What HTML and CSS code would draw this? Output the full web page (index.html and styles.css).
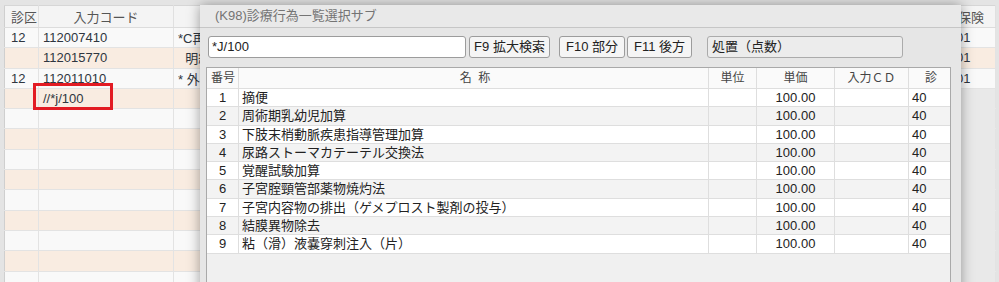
FILE: index.html
```html
<!DOCTYPE html>
<html lang="ja">
<head>
  <meta charset="UTF-8">
  <title>診療行為入力</title>
  <link rel="stylesheet" href="styles.css">
</head>
<body>
<div class="screen">
  <table class="sheet">
    <colgroup>
      <col class="c-kbn">
      <col class="c-code">
      <col class="c-name">
      <col class="c-hoken">
    </colgroup>
    <thead>
      <tr><th>診区</th><th>入力コード</th><th></th><th>保険</th></tr>
    </thead>
    <tbody>
      <tr><td>12</td><td>112007410</td><td><span class="clip">*C再診料</span></td><td>01</td></tr>
      <tr><td></td><td>112015770</td><td><span class="clip">&nbsp;&nbsp;明細書発行体制等加算</span></td><td>01</td></tr>
      <tr><td>12</td><td>112011010</td><td><span class="clip">* 外来管理加算</span></td><td>01</td></tr>
      <tr><td></td><td class="focus"><span class="mark"></span>//*j/100</td><td></td><td class="off"></td></tr>
      <tr><td></td><td></td><td></td><td class="off"></td></tr>
      <tr><td></td><td></td><td></td><td class="off"></td></tr>
      <tr><td></td><td></td><td></td><td class="off"></td></tr>
      <tr><td></td><td></td><td></td><td class="off"></td></tr>
      <tr><td></td><td></td><td></td><td class="off"></td></tr>
      <tr><td></td><td></td><td></td><td class="off"></td></tr>
      <tr><td></td><td></td><td></td><td class="off"></td></tr>
      <tr><td></td><td></td><td></td><td class="off"></td></tr>
      <tr><td></td><td></td><td></td><td class="off"></td></tr>
    </tbody>
  </table>

  <div class="dialog">
    <div class="dialog-title">(K98)診療行為一覧選択サブ</div>
    <div class="toolbar">
      <div class="field">*J/100</div>
      <button class="btn btn-f9">F9 拡大検索</button>
      <button class="btn btn-f10">F10 部分</button>
      <button class="btn btn-f11">F11 後方</button>
      <div class="label-box">処置（点数）</div>
    </div>
    <div class="list">
      <div class="row head">
        <span class="no">番号</span>
        <span class="name">名&nbsp;&nbsp;称</span>
        <span class="unit">単位</span>
        <span class="price">単価</span>
        <span class="cd">入力ＣＤ</span>
        <span class="kbn">診</span>
      </div>
      <div class="row"><span class="no">1</span><span class="name">摘便</span><span class="unit"></span><span class="price">100.00</span><span class="cd"></span><span class="kbn">40</span></div>
      <div class="row"><span class="no">2</span><span class="name">周術期乳幼児加算</span><span class="unit"></span><span class="price">100.00</span><span class="cd"></span><span class="kbn">40</span></div>
      <div class="row"><span class="no">3</span><span class="name">下肢末梢動脈疾患指導管理加算</span><span class="unit"></span><span class="price">100.00</span><span class="cd"></span><span class="kbn">40</span></div>
      <div class="row"><span class="no">4</span><span class="name">尿路ストーマカテーテル交換法</span><span class="unit"></span><span class="price">100.00</span><span class="cd"></span><span class="kbn">40</span></div>
      <div class="row"><span class="no">5</span><span class="name">覚醒試験加算</span><span class="unit"></span><span class="price">100.00</span><span class="cd"></span><span class="kbn">40</span></div>
      <div class="row"><span class="no">6</span><span class="name">子宮腟頸管部薬物焼灼法</span><span class="unit"></span><span class="price">100.00</span><span class="cd"></span><span class="kbn">40</span></div>
      <div class="row"><span class="no">7</span><span class="name">子宮内容物の排出（ゲメプロスト製剤の投与）</span><span class="unit"></span><span class="price">100.00</span><span class="cd"></span><span class="kbn">40</span></div>
      <div class="row"><span class="no">8</span><span class="name">結膜異物除去</span><span class="unit"></span><span class="price">100.00</span><span class="cd"></span><span class="kbn">40</span></div>
      <div class="row"><span class="no">9</span><span class="name">粘（滑）液嚢穿刺注入（片）</span><span class="unit"></span><span class="price">100.00</span><span class="cd"></span><span class="kbn">40</span></div>
    </div>
  </div>
</div>
</body>
</html>
```

FILE: styles.css
```css
body {
  margin: 0;
  background: #dedede;
  font-family: 'Liberation Sans', 'Noto Sans CJK JP', sans-serif;
  font-size: 13px;
  color: #333;
}

.screen {
  position: relative;
  width: 999px;
  height: 282px;
  overflow: hidden;
  padding: 5px 0 0 4px;
  box-sizing: border-box;
  background: #e4e4e4;
}

/* background input sheet */
.sheet {
  border-collapse: collapse;
  table-layout: fixed;
  width: 992px;
  border-left: 1px solid #cfcfcf;
  border-right: 1px solid #c8c8c8;
  border-top: 1px solid #d6d6d6;
}

.c-kbn { width: 34px; }
.c-code { width: 135px; }
.c-hoken { width: 41px; }

.sheet th {
  height: 21px;
  padding: 0;
  background: #f4f4f4;
  color: #555;
  font-weight: normal;
  font-size: 13px;
  border-bottom: 1px solid #dcdcdc;
  border-right: 1px solid #e0e0e0;
}

.sheet th:first-child { text-align: left; padding-left: 6px; }
.sheet th:last-child { text-align: left; padding-left: 3px; }

.sheet td {
  height: 19.3px;
  padding: 0 0 0 4px;
  white-space: nowrap;
  overflow: hidden;
  border-bottom: 1px solid #e3e3e3;
  border-right: 1px solid #e3e3e3;
  background: #f9f9f9;
  color: #2f3640;
}

.sheet td:first-child { padding-left: 6px; }
.sheet td:last-child { padding-left: 1px; }
.sheet tbody tr:nth-child(even) td { background: #f9ece1; }
.sheet tbody tr td.off { background: #e9e9e9; border-bottom-color: #e9e9e9; }

/* only the part left of the dialog is ever visible */
.clip {
  display: inline-block;
  width: 22px;
  overflow: hidden;
  vertical-align: top;
}

.sheet td.focus {
  position: relative;
  overflow: visible;
}

.mark {
  position: absolute;
  left: -6px;
  top: -6px;
  width: 74px;
  height: 21px;
  border: 3px solid #e21b23;
}

/* selection dialog */
.dialog {
  position: absolute;
  left: 200px;
  top: 5px;
  width: 761px;
  height: 300px;
  background: #e6e6e6;
  box-shadow: 0 0 12px rgba(0, 0, 0, 0.38);
}

.dialog-title {
  height: 22px;
  line-height: 22px;
  padding-left: 15px;
  background: #e9e9e9;
  border-bottom: 1px solid #c6c6c6;
  color: #747474;
  font-size: 13px;
}

.toolbar {
  display: flex;
  align-items: center;
  padding: 8px 0 0 8px;
  height: 22px;
}

.field,
.btn,
.label-box {
  height: 22px;
  box-sizing: border-box;
  border: 1px solid #9c9c9c;
  border-radius: 3px;
  font-family: inherit;
  font-size: 13px;
  color: #222;
  line-height: 20px;
}

.field {
  width: 258px;
  background: #fff;
  padding-left: 3px;
}

.btn {
  padding: 0;
  background: #f5f5f5;
  text-align: center;
}

.btn-f9 { width: 81px; margin-left: 3px; }
.btn-f10 { width: 66px; margin-left: 9px; }
.btn-f11 { width: 65px; margin-left: 2px; }

.label-box {
  width: 196px;
  margin-left: 15px;
  padding-left: 4px;
  background: #ececec;
  border-color: #ababab;
}

.list {
  margin: 9px 0 0 6px;
  width: 745px;
  height: 240px;
  box-sizing: border-box;
  background: #f0f0f0;
  border: 1px solid #a9a9a9;
  border-bottom: none;
}

.row {
  display: grid;
  grid-template-columns: 32px 470px 48px 78px 74px 41px;
  height: 17.3px;
  line-height: 17px;
  border-bottom: 1px solid #dedede;
  background: #fff;
  color: #222;
}

.row:nth-child(odd) { background: #f3f3f3; }

.row span {
  border-right: 1px solid #dedede;
  white-space: nowrap;
  overflow: hidden;
}

.row span:last-child { border-right: none; }

.row.head {
  height: 20px;
  line-height: 20px;
  background: #fafafa;
  color: #444;
  font-size: 12px;
}

.row.head span { text-align: center; }
.row.head .no { text-align: left; padding-left: 4px; }

.no { text-align: center; }
.name { padding-left: 3px; }
.price { text-align: center; }
.kbn { padding-left: 3px; }
```
